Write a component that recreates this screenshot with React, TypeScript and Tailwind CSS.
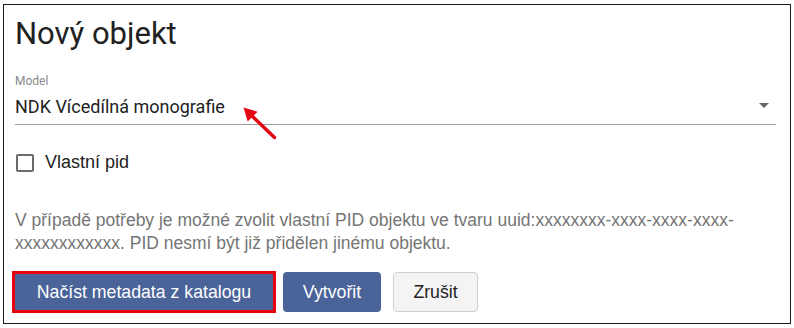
import React from 'react';

const Arrow: React.FC = () => (
  <svg className="absolute left-[232px] top-[98px]" width="44" height="42" viewBox="0 0 44 42">
    <line x1="38.5" y1="34.5" x2="15" y2="12" stroke="#e30613" strokeWidth="3.5" strokeLinecap="round" />
    <polygon points="7.5,4.5 21.6,8.7 11.7,18.6" fill="#e30613" />
  </svg>
);

const App: React.FC = () => {
  return (
    <div className="w-[794px] h-[328px] bg-white pt-[4px] pl-[3px]">
      <div className="relative w-[788px] h-[320px] border-[1.5px] border-[#1a1a1a] bg-white pl-[11px] pr-[14px] font-['Liberation_Sans',Arial,sans-serif]">
        <h1 className="pt-[11px] text-[31px] leading-[36px] text-[#212121] font-['Roboto',sans-serif]">Nový objekt</h1>

        <div className="mt-[22px] font-['Roboto',sans-serif]">
          <div className="text-[12px] leading-[14px] text-[#8a8a8a]">Model</div>
          <div className="flex items-center justify-between h-[37px] border-b border-[#9e9e9e]">
            <span className="text-[18px] text-[#212121]">NDK Vícedílná monografie</span>
            <span className="mr-[7px] -mt-[1px] w-0 h-0 border-l-[5px] border-r-[5px] border-t-[5px] border-l-transparent border-r-transparent border-t-[#666]" />
          </div>
        </div>

        <label className="mt-[28px] h-[19px] flex items-center gap-[11px]">
          <span className="ml-[1px] w-[18px] h-[18px] border-2 border-[#6b6b6b] rounded-[2px]" />
          <span className="text-[18px] text-[#222]">Vlastní pid</span>
        </label>

        <p className="mt-[37px] text-[17.5px] leading-[23px] text-[#757575]">
          V případě potřeby je možné zvolit vlastní PID objektu ve tvaru uuid:xxxxxxxx-xxxx-xxxx-xxxx-xxxxxxxxxxxx. PID nesmí být již přidělen jinému objektu.
        </p>

        <div className="mt-[16px] -ml-[3px] flex items-center">
          <div className="w-[264px] h-[42px] border-[3px] border-[#e8000b] bg-[#4a6399] flex items-center justify-center">
            <button className="text-white text-[17.7px]">Načíst metadata z katalogu</button>
          </div>
          <button className="ml-[7px] w-[98px] h-[40px] rounded-[4px] bg-[#4a6399] text-white text-[17.7px]">Vytvořit</button>
          <button className="ml-[12px] w-[85px] h-[40px] rounded-[4px] bg-[#f4f4f4] border border-[#cfcfcf] text-[#222] text-[17.7px]">Zrušit</button>
        </div>

        <Arrow />
      </div>
    </div>
  );
};

export default App;
